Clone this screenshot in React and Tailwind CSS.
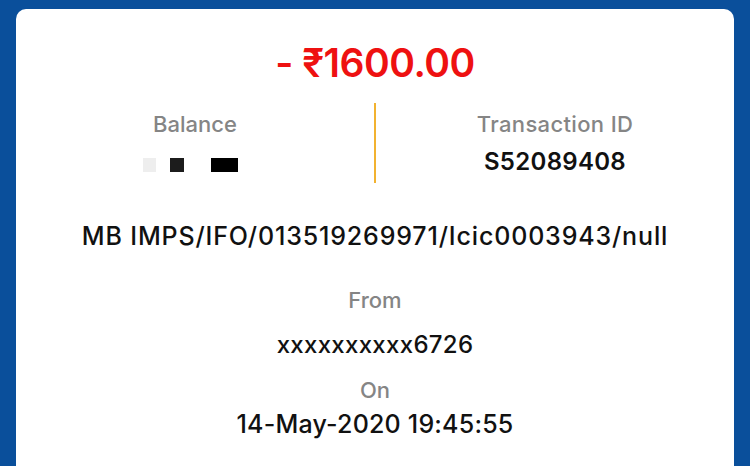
export default function App() {
  return (
    <div
      className="w-[750px] h-[466px] overflow-hidden bg-[#0a4f9b] px-4 pt-[9px]"
      style={{ fontFamily: "Inter, 'Noto Sans', sans-serif" }}
    >
      <div className="h-[480px] bg-white rounded-[10px] flex flex-col items-center pt-[34px]">
        <div className="text-[39px] leading-[40px] font-semibold text-[#ee1111] tracking-[-0.5px]">
          - ₹1600.00
        </div>

        <div className="mt-[20px] w-full grid grid-cols-[1fr_2px_1fr] h-[80px]">
          <div className="flex flex-col items-center justify-center gap-[10px]">
            <div className="text-[22px] leading-[28px] font-medium text-[#858585]">Balance</div>
            <div className="h-[28px] flex items-center pt-[6px] mr-[9px]">
              <span className="w-[13px] h-[14px] bg-[#eeeeee]" />
              <span className="ml-[14px] w-[14px] h-[14px] bg-[#1c1c1c]" />
              <span className="ml-[27px] w-[27px] h-[14px] bg-black" />
            </div>
          </div>
          <div className="bg-[#f2b230]" />
          <div className="flex flex-col items-center justify-center gap-[10px]">
            <div className="text-[22px] leading-[28px] font-medium text-[#858585] tracking-[0.35px]">
              Transaction ID
            </div>
            <div className="text-[24px] leading-[28px] font-semibold text-[#111] tracking-[0.3px]">
              S52089408
            </div>
          </div>
        </div>

        <div className="mt-[39px] text-[25px] leading-[28px] font-medium text-[#111] tracking-[0.85px]">
          MB IMPS/IFO/013519269971/Icic0003943/null
        </div>

        <div className="mt-[36px] text-[22px] leading-[28px] font-medium text-[#858585]">From</div>
        <div className="mt-[17px] text-[24px] leading-[28px] font-medium text-[#111] tracking-[0.3px]">
          xxxxxxxxxx6726
        </div>
        <div className="mt-[17px] text-[22px] leading-[28px] font-medium text-[#858585]">On</div>
        <div className="mt-[6px] text-[25px] leading-[28px] font-medium text-[#111] tracking-[0.2px]">
          14-May-2020 19:45:55
        </div>
      </div>
    </div>
  );
}
